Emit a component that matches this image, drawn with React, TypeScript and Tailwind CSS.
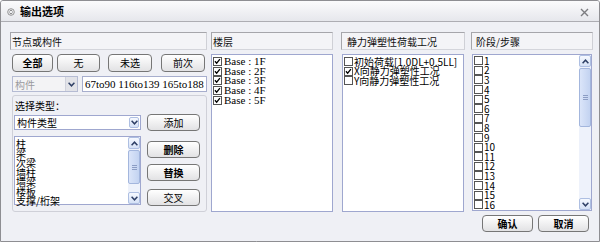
import React from "react";

const CJK = "font-['Noto_Sans_CJK_SC','Noto_Sans',sans-serif]";
const SERIF = "font-['Liberation_Serif','Noto_Sans_CJK_SC',serif]";

function Check({ checked }: { checked?: boolean }) {
  return (
    <div className="w-[9px] h-[9px] shrink-0 border border-[#555] bg-white flex">
      {checked && (
        <svg viewBox="0 0 9 9" className="w-full h-full">
          <path d="M1.2 4.2 L3.4 6.6 L7.6 1.4" stroke="#000" strokeWidth="1.7" fill="none" />
        </svg>
      )}
    </div>
  );
}

function Chevron({ up }: { up?: boolean }) {
  return (
    <svg width="7" height="5" viewBox="0 0 7 5">
      <path
        d={up ? "M0.6 4.2 L3.5 1.2 L6.4 4.2" : "M0.6 0.8 L3.5 3.8 L6.4 0.8"}
        stroke="#2f4066"
        strokeWidth="1.5"
        fill="none"
      />
    </svg>
  );
}

function SBtn({ up }: { up?: boolean }) {
  return (
    <div className="h-[12px] w-full shrink-0 flex items-center justify-center rounded-[2px] border border-[#aebfe2] bg-linear-to-b from-[#f6f9ff] to-[#d5e1f6]">
      <Chevron up={up} />
    </div>
  );
}

function Thumb({ h }: { h: string }) {
  return (
    <div
      className={`${h} mt-px w-full shrink-0 rounded-[2px] border border-[#a3b6dd] bg-linear-to-r from-[#dbe5f9] to-[#c3d3f1] flex flex-col items-center justify-center gap-[1px]`}
    >
      <div className="w-[5px] h-px bg-[#8c9dc4]" />
      <div className="w-[5px] h-px bg-[#8c9dc4]" />
      <div className="w-[5px] h-px bg-[#8c9dc4]" />
    </div>
  );
}

function Scrollbar({ thumb }: { thumb: string }) {
  return (
    <div className="w-[12px] h-full shrink-0 flex flex-col bg-[#eef2fb]">
      <SBtn up />
      <Thumb h={thumb} />
      <div className="flex-1" />
      <SBtn />
    </div>
  );
}

function Btn({
  children,
  className = "",
  bold,
}: {
  children: React.ReactNode;
  className?: string;
  bold?: boolean;
}) {
  return (
    <div
      className={`flex items-center justify-center rounded-[4px] border border-[#767676] bg-linear-to-b from-[#ffffff] to-[#e2e2e4] text-[10px] leading-none text-black ${CJK} ${
        bold ? "font-bold" : ""
      } ${className}`}
    >
      {children}
    </div>
  );
}

function Header({ children, className = "" }: { children: React.ReactNode; className?: string }) {
  return (
    <div
      className={`h-[18px] flex items-center border border-[#a6a6ab] border-r-[#cfd0d6] border-b-[#d4d5db] bg-[#f4f4f7] text-[10px] text-[#111] ${CJK} ${className}`}
    >
      {children}
    </div>
  );
}

const floors = ["1F", "2F", "3F", "4F", "5F"];
const types = ["柱", "梁", "次梁", "墙柱", "墙梁", "楼板", "支撑/桁架"];
const steps = Array.from({ length: 16 }, (_, i) => String(i + 1));

export default function App() {
  return (
    <div className="w-[600px] h-[243px] bg-white">
      <div className="w-[600px] h-[242px] flex flex-col border border-[#8e8e92] rounded-t-[3px] bg-[#eff0f5] overflow-hidden">
        {/* Title bar */}
        <div className="h-[21px] shrink-0 flex items-center border-b border-[#adadb3] bg-linear-to-b from-[#fbfbfc] to-[#e6e7ec] pl-[6px] pr-[10px]">
          <svg width="8" height="8" viewBox="0 0 8 8" className="mt-[2px]">
            <circle cx="4" cy="4" r="3.3" fill="none" stroke="#8a8a8a" strokeWidth="0.9" />
            <path d="M2.4 3.4 L4 2 L5.6 3.4 M2.4 4.6 L4 6 L5.6 4.6" stroke="#6a6a6a" strokeWidth="0.8" fill="none" />
          </svg>
          <span className={`ml-[5px] text-[11px] font-bold text-black ${CJK}`}>输出选项</span>
          <div className="flex-1" />
          <svg width="9" height="9" viewBox="0 0 9 9" className="mt-[3px]">
            <path d="M1 1 L8 8 M8 1 L1 8" stroke="#7c7c80" strokeWidth="1.4" />
          </svg>
        </div>

        {/* Body */}
        <div className="flex pl-[9px] pt-[10px]">
          {/* Column 1 */}
          <div className="w-[197px] flex flex-col">
            <Header className="pl-[1px]">节点或构件</Header>
            <div className="flex mt-[4px] h-[18px] pl-[2px]">
              <Btn bold className="w-[41px]">全部</Btn>
              <Btn className="w-[43px] ml-[4px]">无</Btn>
              <Btn className="w-[44px] ml-[8px]">未选</Btn>
              <Btn className="w-[44px] ml-[9px]">前次</Btn>
            </div>
            <div className="flex mt-[4px] h-[16px] pl-[2px]">
              <div className="w-[66px] flex items-center border border-[#b5bbd3] bg-[#f3f3f5]">
                <span className={`pl-[2px] flex-1 text-[10px] text-[#9a9a9e] ${CJK}`}>构件</span>
                <div className="w-[12px] h-full flex items-center justify-center bg-[#e2e3e8] border-l border-[#d0d2dc]">
                  <Chevron />
                </div>
              </div>
              <div className={`ml-[4px] w-[125px] flex items-center border border-[#a7aecd] bg-white pl-[2px] text-[11px] leading-none text-black ${SERIF}`}>
                67to90 116to139 165to188
              </div>
            </div>
            {/* Group box */}
            <div className="mt-[3px] ml-[2px] w-[195px] h-[117px] rounded-[3px] border border-[#cfd0d8] pl-[1px] flex flex-col">
              <div className={`mt-[2px] h-[14px] flex items-center pl-[1px] text-[10px] text-black ${CJK}`}>选择类型：</div>
              <div className="mt-[3px] flex">
                <div className="w-[127px] h-[15px] flex items-center border border-[#9fa7cf] bg-white">
                  <span className={`pl-[2px] flex-1 text-[10px] text-black ${CJK}`}>构件类型</span>
                  <div className="w-[12px] h-full p-px">
                    <div className="w-full h-full flex items-center justify-center rounded-[2px] border border-[#aebfe2] bg-linear-to-b from-[#f6f9ff] to-[#d5e1f6]">
                      <Chevron />
                    </div>
                  </div>
                </div>
                <Btn className="ml-[6px] w-[53px] h-[17px] -mt-[1px]">添加</Btn>
              </div>
              <div className="mt-[5px] flex">
                <div className="w-[127px] h-[69px] flex border border-[#9fa7cf] bg-white">
                  <div className={`flex-1 pt-[2px] pl-px text-[10px] text-black ${CJK}`}>
                    {types.map((t) => (
                      <div key={t} className="h-[9.6px] flex items-center leading-none">
                        {t}
                      </div>
                    ))}
                  </div>
                  <Scrollbar thumb="h-[34px]" />
                </div>
                <div className="ml-[6px] w-[53px] flex flex-col">
                  <Btn bold className="mt-[5px] h-[17px]">删除</Btn>
                  <Btn bold className="mt-[6px] h-[17px]">替换</Btn>
                  <Btn className="mt-[8px] h-[17px]">交叉</Btn>
                </div>
              </div>
            </div>
          </div>

          {/* Column 2 */}
          <div className="ml-[4px] w-[122px] flex flex-col">
            <Header className="pl-[1px]">楼层</Header>
            <div className={`mt-[4px] h-[158px] border border-[#9fa7cf] bg-white pt-[2px] pl-px text-[11px] text-black ${SERIF}`}>
              {floors.map((f) => (
                <div key={f} className="h-[9.6px] flex items-center leading-none">
                  <Check checked />
                  <span className="ml-[2px] whitespace-pre">{`Base : ${f}`}</span>
                </div>
              ))}
            </div>
          </div>

          {/* Column 3 */}
          <div className="ml-[8px] w-[124px] flex flex-col">
            <Header className="pl-[5px]">静力弹塑性荷载工况</Header>
            <div className={`mt-[4px] mx-px h-[158px] border border-[#9fa7cf] bg-white pt-[2px] pl-px text-[10px] text-black ${CJK}`}>
              <div className="h-[9.6px] flex items-center leading-none whitespace-nowrap">
                <Check />
                <span className="ml-[1px]">初始荷载[1.0DL+0.5LL]</span>
              </div>
              <div className="h-[9.6px] flex items-center leading-none whitespace-nowrap">
                <Check checked />
                <span className="ml-[1px]">X向静力弹塑性工况</span>
              </div>
              <div className="h-[9.6px] flex items-center leading-none whitespace-nowrap">
                <Check />
                <span className="ml-[1px]">Y向静力弹塑性工况</span>
              </div>
            </div>
          </div>

          {/* Column 4 */}
          <div className="ml-[6px] w-[122px] flex flex-col">
            <Header className="pl-[4px]">阶段/步骤</Header>
            <div className="mt-[4px] mx-px h-[157px] flex border border-[#9fa7cf] bg-white">
              <div className={`flex-1 pt-[1px] pl-px text-[10px] text-black ${CJK}`}>
                {steps.map((s) => (
                  <div key={s} className="h-[9.6px] flex items-center leading-none">
                    <Check />
                    <span className="ml-[1px]">{s}</span>
                  </div>
                ))}
              </div>
              <Scrollbar thumb="h-[59px]" />
            </div>
            <div className="flex mt-[4px] h-[17px]">
              <Btn bold className="ml-[11px] w-[51px]">确认</Btn>
              <Btn bold className="ml-[5px] w-[51px]">取消</Btn>
            </div>
          </div>
        </div>
      </div>
    </div>
  );
}
